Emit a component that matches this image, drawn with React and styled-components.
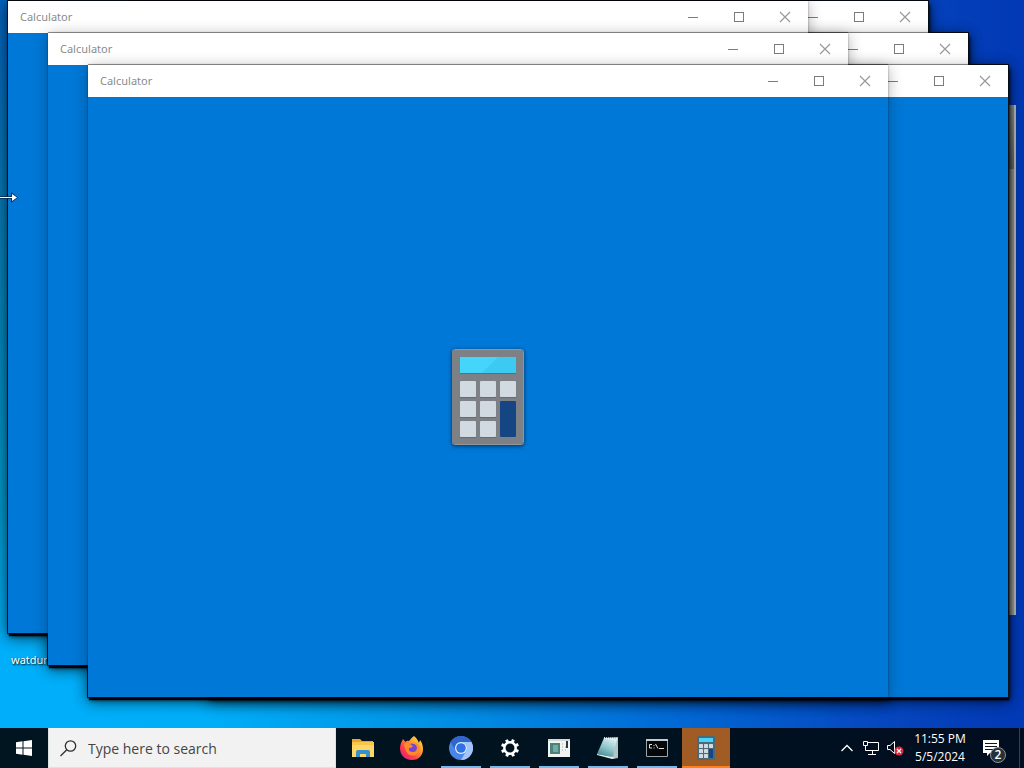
import React from 'react';
import styled, { createGlobalStyle } from 'styled-components';

const GlobalStyle = createGlobalStyle`
  * {
    box-sizing: border-box;
  }

  body {
    margin: 0;
    overflow: hidden;
    font-family: "Open Sans", "Noto Sans", sans-serif;
    font-size: 12px;
  }

  button,
  input {
    font: inherit;
    border: none;
    border-radius: 0;
    padding: 0;
    margin: 0;
  }
`;

const Screen = styled.div`
  display: flex;
  flex-direction: column;
  height: 100vh;
`;

const Desktop = styled.main`
  position: relative;
  flex: 1;
  overflow: hidden;
  background: linear-gradient(to right, #00aefa 0%, #00aef8 20%, #0098e8 38%, #0070d8 62%, #0648c0 85%, #0238b4 100%);
`;

const EdgeShade = styled.div`
  position: absolute;
  top: 0;
  left: 0;
  width: 48px;
  height: 100%;
  background: linear-gradient(to bottom, #0562bc, #087cb4 30%, #0098cc 70%, transparent 90%);
`;

const BackWindow = styled.div`
  position: absolute;
  left: 216px;
  top: 105px;
  width: 800px;
  height: 510px;
  background: linear-gradient(to bottom, #8c9090 0, #64686a 64px, #8e9290 64px, #9a9c98 100%);
  border-right: 2px solid #b8bab4;
`;

const DesktopLabel = styled.span`
  position: absolute;
  left: 11px;
  top: 652px;
  color: #fff;
  font-family: "Noto Sans", sans-serif;
  font-size: 11px;
  line-height: 16px;
  text-shadow: 1px 1px 2px #000;
`;

const Pointer = styled.svg`
  position: absolute;
  left: 0;
  top: 192px;
`;

// The heavy shadow falls on the desktop only, so it is drawn under every window
const DesktopShadow = styled.div`
  position: absolute;
  left: ${props => props.$x}px;
  top: ${props => props.$y}px;
  width: 800px;
  height: 632px;
  box-shadow: 0 0 0 1px #0a1420, 1px 3px 1px rgba(0, 0, 0, 0.9), 2px 3px 4px rgba(0, 0, 0, 0.7), 0 4px 14px rgba(0, 0, 0, 0.45);
`;

const StyledWindow = styled.section`
  position: absolute;
  left: ${props => props.$x}px;
  top: ${props => props.$y}px;
  width: 800px;
  height: 632px;
  display: flex;
  flex-direction: column;
  background: #0078d7;
  box-shadow: 0 -1px 0 rgba(0, 0, 0, 0.35), 0 0 2px rgba(0, 0, 0, 0.4), 0 2px 14px rgba(0, 0, 0, 0.3);
`;

const TitleBar = styled.header`
  display: flex;
  align-items: center;
  height: 32px;
  padding-left: 12px;
  background: #fff;
  color: #8c8c8c;
`;

const Title = styled.h1`
  flex: 1;
  margin: 0;
  font-family: "Noto Sans", sans-serif;
  font-size: 11px;
  line-height: 16px;
  font-weight: 400;
`;

const CaptionButton = styled.button`
  display: flex;
  align-items: center;
  justify-content: center;
  width: 46px;
  height: 32px;
  background: transparent;
  color: ${props => (props.$light ? '#999' : '#7c7c7c')};
`;

const Splash = styled.div`
  flex: 1;
  display: flex;
  align-items: center;
  justify-content: center;
`;

const Taskbar = styled.footer`
  display: flex;
  height: 40px;
  background: linear-gradient(to right, #001520, #00131f 50%, #010d20);
  color: #fff;
`;

const StartButton = styled.button`
  display: flex;
  align-items: center;
  justify-content: center;
  width: 48px;
  background: transparent;
`;

const SearchBox = styled.label`
  display: flex;
  align-items: center;
  gap: 11px;
  width: 288px;
  padding: 2px 12px 0 11px;
  background: #f2f2f2;
  border: 1px solid #dde2e5;
  border-top: none;
`;

const SearchInput = styled.input`
  flex: 1;
  min-width: 0;
  background: transparent;
  font-size: 14px;
  outline: none;

  &::placeholder {
    color: #454545;
    opacity: 1;
  }
`;

const Apps = styled.nav`
  display: flex;
  gap: 1px;
  flex: 1;
  padding-left: 3px;
`;

const AppButton = styled.button`
  position: relative;
  display: flex;
  align-items: center;
  justify-content: center;
  width: 48px;
  background: ${props => (props.$active ? '#a05c24' : 'transparent')};

  &::after {
    content: "";
    position: absolute;
    left: ${props => (props.$active ? 0 : 4)}px;
    right: ${props => (props.$active ? 0 : 4)}px;
    bottom: 0;
    height: 2px;
    background: ${props => (props.$active ? '#ff7f18' : '#76b9ed')};
    display: ${props => (props.$running || props.$active ? 'block' : 'none')};
  }
`;

const Tray = styled.div`
  display: flex;
  align-items: center;
`;

const TrayButton = styled.button`
  display: flex;
  align-items: center;
  justify-content: center;
  width: 24px;
  height: 40px;
  background: transparent;
`;

const Clock = styled.button`
  width: 66px;
  height: 40px;
  background: transparent;
  color: #fff;
  font-size: 12px;
  line-height: 18px;
  white-space: nowrap;
`;

const ActionCenter = styled(TrayButton)`
  width: 46px;
  padding: 6px 4px 0 0;
`;

const ShowDesktop = styled.button`
  width: 5px;
  height: 40px;
  background: transparent;
  border-left: 1px solid #34414c;
`;

const keys = [[8, 32], [28, 32], [48, 32], [8, 52], [28, 52], [8, 72], [28, 72]];

function CalculatorArt({ width, height }) {
  const small = width < 40;
  return (
    <svg width={width} height={height} viewBox="0 0 72 96" aria-hidden="true">
      <rect width="72" height="96" rx="3" fill={small ? '#4d6877' : '#7d8084'} />
      {!small && <path d="M3 .5H69M71.5 3V93M3 95.5H69" stroke="#929599" fill="none" />}
      <rect x="8" y="8" width="56" height="16" fill="#45d4fa" />
      {!small && <path d="M46 8H64V24H30Z" fill="#30bce8" opacity="0.4" />}
      {!small && <path d="M8 24.5H64M8 48.5H24M28 48.5H44M48 48.5H64M8 68.5H24M28 68.5H44M8 88.5H24M28 88.5H44" stroke="#676b70" />}
      {keys.map(([x, y]) => (
        <rect key={`${x}-${y}`} x={x} y={y} width="16" height="16" rx="1" fill="#d1d9e1" />
      ))}
      <rect x="48" y="52" width="16" height="36" rx="1" fill="#164584" />
    </svg>
  );
}

const SplashArt = styled.div`
  display: flex;
  filter: drop-shadow(0 1px 2px rgba(0, 20, 50, 0.7));
`;

function CalculatorWindow({ x, y }) {
  return (
    <StyledWindow $x={x} $y={y} aria-label="Calculator">
      <TitleBar>
        <Title>Calculator</Title>
        <CaptionButton aria-label="Minimize">
          <svg width="10" height="10"><path d="M0 5.5H10" stroke="currentColor" /></svg>
        </CaptionButton>
        <CaptionButton aria-label="Maximize">
          <svg width="10" height="10"><rect x=".5" y=".5" width="9" height="9" fill="none" stroke="currentColor" /></svg>
        </CaptionButton>
        <CaptionButton $light aria-label="Close">
          <svg width="12" height="12"><path d="M1 1L11 11M11 1L1 11" stroke="currentColor" strokeWidth="1.2" /></svg>
        </CaptionButton>
      </TitleBar>
      <Splash>
        <SplashArt><CalculatorArt width={72} height={96} /></SplashArt>
      </Splash>
    </StyledWindow>
  );
}

// Listed from back to front
const windows = [
  { x: 128, y: 1 },
  { x: 168, y: 33 },
  { x: 208, y: 65 },
  { x: 8, y: 1 },
  { x: 48, y: 33 },
  { x: 88, y: 65 },
];

const FolderIcon = () => (
  <svg width="24" height="24" viewBox="0 0 24 24">
    <path d="M1 3H9L11 5H22V8H1Z" fill="#e6a82b" />
    <path d="M1 6H23V21H1Z" fill="#ffd766" />
    <path d="M1 6H23V9H1Z" fill="#f7c64a" />
    <path d="M5 21V16Q5 14 7 14H17Q19 14 19 16V21H15V18H9V21Z" fill="#3790ce" />
  </svg>
);

const FirefoxIcon = () => (
  <svg width="24" height="24" viewBox="0 0 24 24">
    <defs>
      <linearGradient id="fox" x1="1" y1="0" x2="0.1" y2="1">
        <stop offset="0" stopColor="#fff04a" />
        <stop offset="0.4" stopColor="#ff9a2c" />
        <stop offset="0.7" stopColor="#ff3d4b" />
        <stop offset="1" stopColor="#e3198a" />
      </linearGradient>
    </defs>
    <path d="M14 0C17 2 18 5 19 7L20 4C26 12 23 24 12 24C2 24-2 15 1 7L3 3L5.5 6Q7 4 9 5Q11 2 14 0Z" fill="url(#fox)" />
    <circle cx="12" cy="13" r="5.5" fill="#7046d2" />
    <path d="M4 8Q7 6 10 8L13 10Q12 12 9 12Q8 16 13 16Q17 16 17 11Q16 8 13 6Q22 8 19 15Q16 21 10 19Q5 17 4 8Z" fill="#ff8a2c" />
  </svg>
);

const ChromiumIcon = () => (
  <svg width="24" height="24" viewBox="0 0 24 24">
    <circle cx="12" cy="12" r="12" fill="#4a86e8" />
    <path d="M1.6 6A12 12 0 0 1 22.4 6H12A6 6 0 0 0 6.8 15Z" fill="#2f66cc" />
    <path d="M22.4 6A12 12 0 0 1 12 24L17.2 15A6 6 0 0 0 12 6Z" fill="#a3c5fa" />
    <circle cx="12" cy="12" r="6" fill="#e8f0fe" />
    <circle cx="12" cy="12" r="4.8" fill="#2f72e4" />
  </svg>
);

const SettingsIcon = () => (
  <svg width="20" height="20" viewBox="0 0 20 20" fill="none" stroke="#fff">
    <circle cx="10" cy="10" r="5.7" strokeWidth="2.5" />
    {[0, 45, 90, 135, 180, 225, 270, 315].map(angle => (
      <path key={angle} d="M10 1V4" strokeWidth="3" transform={`rotate(${angle + 22} 10 10)`} />
    ))}
  </svg>
);

const PanelIcon = () => (
  <svg width="24" height="24" viewBox="0 0 24 24">
    <path d="M1 3H23V21H1Z" fill="#f2f4f2" />
    <path d="M1 3H23V5H1Z" fill="#d3d9d7" />
    <path d="M3 7H13V18H3Z" fill="#4b8279" />
    <path d="M6 9H11V16H6Z" fill="#73aaa1" />
    <path d="M15 8H16M15 11H16M15 14H16M18 11H19M18 14H19" stroke="#a2aaa8" />
    <path d="M20 5V12" stroke="#29383a" strokeWidth="2" />
  </svg>
);

const NotepadIcon = () => (
  <svg width="24" height="24" viewBox="0 0 24 24">
    <defs>
      <linearGradient id="note" x1="0.7" y1="0" x2="0.2" y2="1">
        <stop offset="0" stopColor="#d7eff2" />
        <stop offset="0.5" stopColor="#8fc4ca" />
        <stop offset="1" stopColor="#3d8790" />
      </linearGradient>
    </defs>
    <path d="M8 2L22 1L22 22L15 21Z" fill="#b6c4c7" />
    <path d="M8 2L21 3L17 21L1 18Z" fill="url(#note)" />
    <path d="M1 18L17 21L22 22L16 23L1 19Z" fill="#e2eded" />
    <path d="M8 2L21 3" stroke="#e9f3f4" strokeDasharray="1 1" strokeWidth="2" />
  </svg>
);

const TerminalIcon = () => (
  <svg width="24" height="24" viewBox="0 0 24 24">
    <path d="M1.5 3.5H22.5V20.5H1.5Z" fill="#050708" stroke="#9ba4a8" />
    <path d="M1 3H23V5H1Z" fill="#c3cbcf" />
    <path d="M7 8.5H4.5V12H7M9 9V10M9 11.5V12.5M10.5 8L13 12.5M14 12.5H19" stroke="#dce2e4" fill="none" />
  </svg>
);

const apps = [
  { name: 'File Explorer', icon: <FolderIcon /> },
  { name: 'Firefox', icon: <FirefoxIcon /> },
  { name: 'Chromium', icon: <ChromiumIcon />, running: true },
  { name: 'Settings', icon: <SettingsIcon />, running: true },
  { name: 'Server Manager', icon: <PanelIcon />, running: true },
  { name: 'Notepad', icon: <NotepadIcon />, running: true },
  { name: 'Command Prompt', icon: <TerminalIcon />, running: true },
  { name: 'Calculator', icon: <CalculatorArt width={18} height={24} />, active: true },
];

export default function App() {
  return (
    <Screen>
      <GlobalStyle />
      <Desktop>
        <EdgeShade />
        <DesktopLabel>watdump</DesktopLabel>
        <BackWindow />
        {windows.map((win, index) => (
          <DesktopShadow key={index} $x={win.x} $y={win.y} />
        ))}
        {windows.map((win, index) => (
          <CalculatorWindow key={index} x={win.x} y={win.y} />
        ))}
        <Pointer width="18" height="12">
          <path d="M0 4H11V0L18 5.5L11 11V7H0Z" fill="#06305c" />
          <path d="M0 5H12V2L17 5.5L12 9V6H0Z" fill="#fff" />
        </Pointer>
      </Desktop>
      <Taskbar>
        <StartButton aria-label="Start">
          <svg width="16" height="16" viewBox="0 0 16 16" fill="#fff">
            <path d="M0 2.2L6.5 1.3V7.5H0ZM7.5 1.2L16 0V7.5H7.5ZM0 8.5H6.5V14.7L0 13.8ZM7.5 8.5H16V16L7.5 14.8Z" />
          </svg>
        </StartButton>
        <SearchBox>
          <svg width="17" height="17" fill="none" stroke="#303030" strokeWidth="1.3">
            <circle cx="10.5" cy="6" r="5.2" />
            <path d="M6.8 9.7L.5 16" />
          </svg>
          <SearchInput type="text" aria-label="Search" placeholder="Type here to search" />
        </SearchBox>
        <Apps>
          {apps.map(app => (
            <AppButton key={app.name} aria-label={app.name} $running={app.running} $active={app.active}>
              {app.icon}
            </AppButton>
          ))}
        </Apps>
        <Tray>
          <TrayButton aria-label="Show hidden icons">
            <svg width="12" height="8" fill="none" stroke="#fff" strokeWidth="1.3"><path d="M.5 7L6 1.5L11.5 7" /></svg>
          </TrayButton>
          <TrayButton aria-label="Network">
            <svg width="18" height="16" fill="none" stroke="#fff">
              <path d="M5 2.5H16.5V10.5H3.5V6M1.5 1.5H5.5V5.5H1.5ZM3.5 5.5V10M10.5 10.5V14M6 14.5H14" />
            </svg>
          </TrayButton>
          <TrayButton aria-label="Volume muted">
            <svg width="18" height="16" fill="none">
              <path d="M1.5 5.5H4L8.5 1.5V13.5L4 9.5H1.5Z" stroke="#fff" />
              <circle cx="13" cy="11" r="4.5" fill="#d92c3c" />
              <path d="M11 9L15 13M15 9L11 13" stroke="#fff" strokeWidth="1.2" />
            </svg>
          </TrayButton>
          <Clock>11:55 PM<br />5/5/2024</Clock>
          <ActionCenter aria-label="2 notifications">
            <svg width="24" height="24" viewBox="0 0 24 24">
              <path d="M1 1H17V14H8L5 17V14H1Z" fill="#fff" />
              <path d="M3 4.5H15M3 7.5H15M3 10.5H12" stroke="#0a1725" />
              <circle cx="16" cy="16" r="7.5" fill="#25313a" stroke="#8b949a" />
              <text x="16" y="20" fill="#fff" fontSize="12" fontWeight="600" textAnchor="middle">2</text>
            </svg>
          </ActionCenter>
          <ShowDesktop aria-label="Show desktop" />
        </Tray>
      </Taskbar>
    </Screen>
  );
}
